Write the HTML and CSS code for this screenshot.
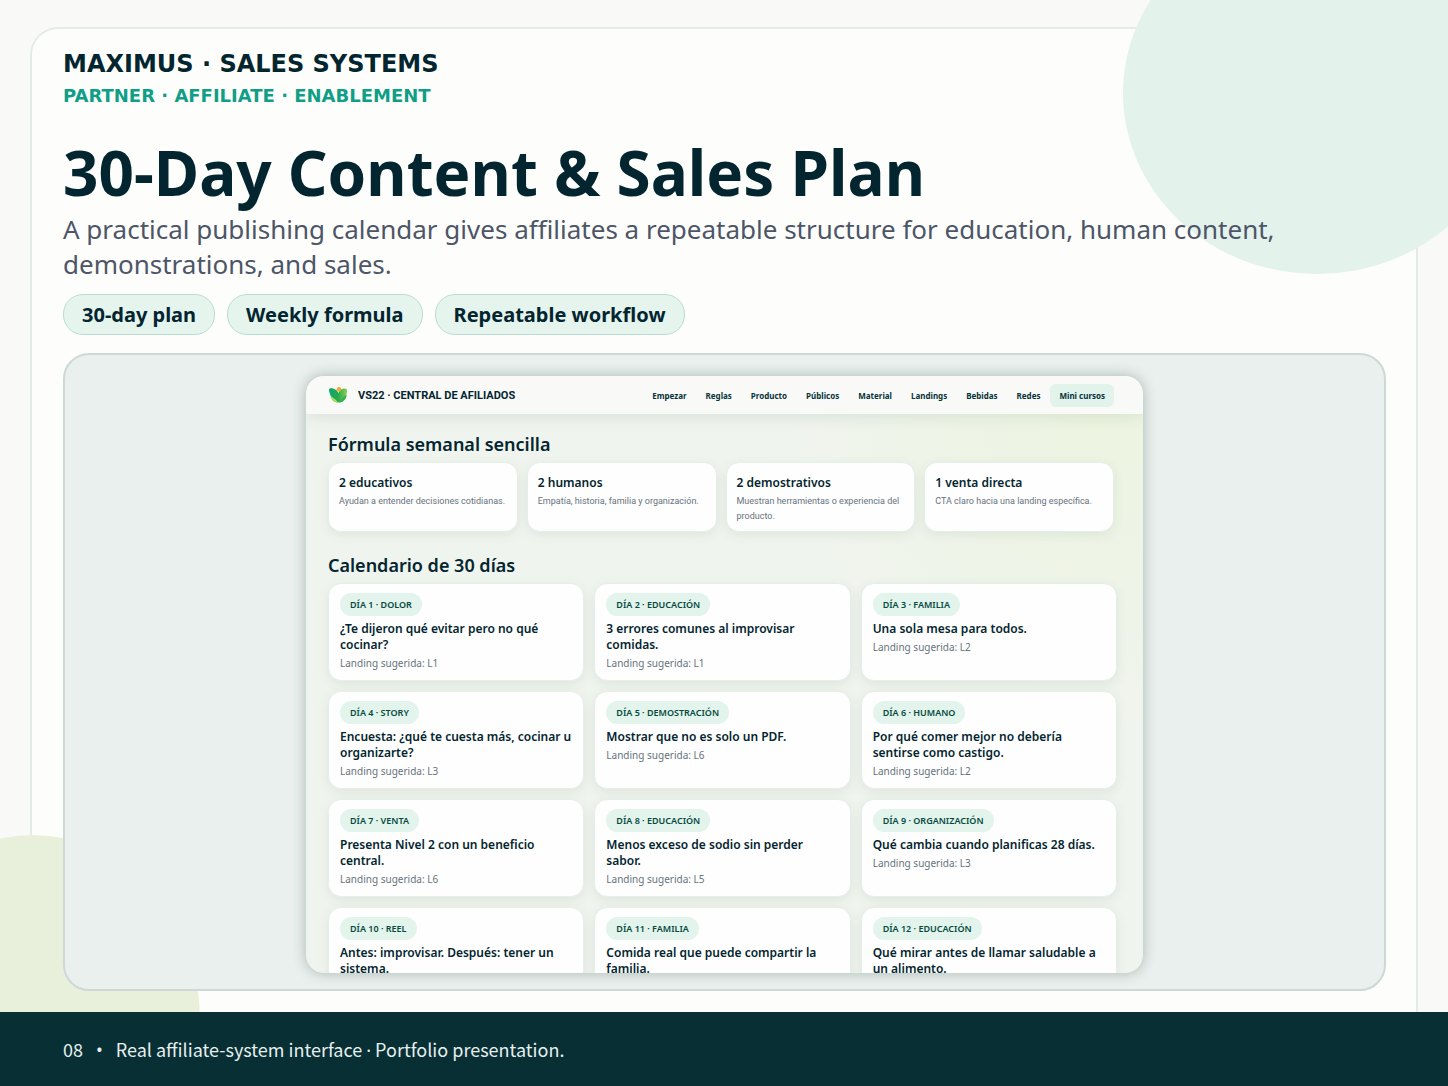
FILE: index.html
```html
<!DOCTYPE html>
<html lang="en">
<head>
<meta charset="UTF-8">
<meta name="viewport" content="width=device-width, initial-scale=1.0">
<title>30-Day Content &amp; Sales Plan</title>
<link rel="stylesheet" href="styles.css">
</head>
<body>
  <div class="frame"></div>
  <div class="blob blob-top"></div>
  <div class="blob blob-bottom"></div>

  <main class="slide">
    <div class="brand">
      <p class="brand-name">MAXIMUS · SALES SYSTEMS</p>
      <p class="brand-tag">PARTNER · AFFILIATE · ENABLEMENT</p>
    </div>

    <h1>30-Day Content &amp; Sales Plan</h1>
    <p class="lead">A practical publishing calendar gives affiliates a repeatable structure for education, human content, demonstrations, and sales.</p>

    <ul class="pills">
      <li>30-day plan</li>
      <li>Weekly formula</li>
      <li>Repeatable workflow</li>
    </ul>

    <section class="stage">
      <div class="app" lang="es">
        <header class="app-header">
          <svg class="logo" viewBox="0 0 20 16" aria-hidden="true">
            <defs>
              <linearGradient id="leaf" x1="0" y1="0" x2="1" y2="0">
                <stop offset="0" stop-color="#0ca672"/>
                <stop offset="0.5" stop-color="#25a94c"/>
                <stop offset="1" stop-color="#8fd158"/>
              </linearGradient>
            </defs>
            <path d="M1 3.500C.6 1.400 3 1 5 1.600C7.500 2.200 9.400 3.800 10.400 6C11.400 3.800 13 1.800 16 1.500C18.600 1.200 19.600 2.400 19 4.500C18.600 6 18.800 8.500 17.600 11C16.200 14 13.500 15.600 10.300 15.600C7.300 15.600 4.800 14.200 3.800 11.500C3.200 9.500 1.400 6.500 1 3.500Z" fill="url(#leaf)"/>
            <path d="M2.500 9C5 10.500 8 12.500 10.300 15.400C6.500 15.600 3 13 2.500 9Z" fill="#a9dc63"/>
            <path d="M18.600 8C16 9 13 11.500 11.500 15.400C15.500 15 18.200 12 18.600 8Z" fill="#35b04a"/>
            <circle cx="11" cy="2.300" r="2.200" fill="#f6a33c"/>
          </svg>
          <strong class="app-name">VS22 · CENTRAL DE AFILIADOS</strong>
          <nav>
            <a href="#">Empezar</a>
            <a href="#">Reglas</a>
            <a href="#">Producto</a>
            <a href="#">Públicos</a>
            <a href="#">Material</a>
            <a href="#">Landings</a>
            <a href="#">Bebidas</a>
            <a href="#">Redes</a>
            <a href="#" class="active">Mini cursos</a>
          </nav>
        </header>

        <div class="app-body">
          <h2>Fórmula semanal sencilla</h2>
          <div class="formula">
            <article class="card">
              <h3>2 educativos</h3>
              <p>Ayudan a entender decisiones cotidianas.</p>
            </article>
            <article class="card">
              <h3>2 humanos</h3>
              <p>Empatía, historia, familia y organización.</p>
            </article>
            <article class="card">
              <h3>2 demostrativos</h3>
              <p>Muestran herramientas o experiencia del producto.</p>
            </article>
            <article class="card">
              <h3>1 venta directa</h3>
              <p>CTA claro hacia una landing específica.</p>
            </article>
          </div>

          <h2>Calendario de 30 días</h2>
          <div class="calendar">
            <article class="card day">
              <span class="tag">DÍA 1 · DOLOR</span>
              <h3>¿Te dijeron qué evitar pero no qué cocinar?</h3>
              <p>Landing sugerida: L1</p>
            </article>
            <article class="card day">
              <span class="tag">DÍA 2 · EDUCACIÓN</span>
              <h3>3 errores comunes al improvisar comidas.</h3>
              <p>Landing sugerida: L1</p>
            </article>
            <article class="card day">
              <span class="tag">DÍA 3 · FAMILIA</span>
              <h3>Una sola mesa para todos.</h3>
              <p>Landing sugerida: L2</p>
            </article>
            <article class="card day">
              <span class="tag">DÍA 4 · STORY</span>
              <h3>Encuesta: ¿qué te cuesta más, cocinar u organizarte?</h3>
              <p>Landing sugerida: L3</p>
            </article>
            <article class="card day">
              <span class="tag">DÍA 5 · DEMOSTRACIÓN</span>
              <h3>Mostrar que no es solo un PDF.</h3>
              <p>Landing sugerida: L6</p>
            </article>
            <article class="card day">
              <span class="tag">DÍA 6 · HUMANO</span>
              <h3>Por qué comer mejor no debería sentirse como castigo.</h3>
              <p>Landing sugerida: L2</p>
            </article>
            <article class="card day">
              <span class="tag">DÍA 7 · VENTA</span>
              <h3>Presenta Nivel 2 con un beneficio central.</h3>
              <p>Landing sugerida: L6</p>
            </article>
            <article class="card day">
              <span class="tag">DÍA 8 · EDUCACIÓN</span>
              <h3>Menos exceso de sodio sin perder sabor.</h3>
              <p>Landing sugerida: L5</p>
            </article>
            <article class="card day">
              <span class="tag">DÍA 9 · ORGANIZACIÓN</span>
              <h3>Qué cambia cuando planificas 28 días.</h3>
              <p>Landing sugerida: L3</p>
            </article>
            <article class="card day">
              <span class="tag">DÍA 10 · REEL</span>
              <h3>Antes: improvisar. Después: tener un sistema.</h3>
            </article>
            <article class="card day">
              <span class="tag">DÍA 11 · FAMILIA</span>
              <h3>Comida real que puede compartir la familia.</h3>
            </article>
            <article class="card day">
              <span class="tag">DÍA 12 · EDUCACIÓN</span>
              <h3>Qué mirar antes de llamar saludable a un alimento.</h3>
            </article>
          </div>
        </div>
      </div>
    </section>
  </main>

  <footer>
    <span>08</span>
    <span class="dot">•</span>
    <span>Real affiliate-system interface <span class="dot">·</span> Portfolio presentation.</span>
  </footer>
</body>
</html>
```
FILE: styles.css
```css
* {
  box-sizing: border-box;
}

body {
  position: relative;
  display: flex;
  flex-direction: column;
  height: 100vh;
  margin: 0;
  overflow: hidden;
  background: #f9faf7;
  color: #03252f;
  font-family: "Noto Sans", sans-serif;
}

h1, h2, h3, p, ul {
  margin: 0;
  padding: 0;
}

/* background decoration */
.frame {
  position: absolute;
  top: 27px;
  right: 30px;
  bottom: 0;
  left: 30px;
  border: 2px solid #e5ece8;
  border-bottom: 0;
  border-radius: 28px 28px 0 0;
  background: #fdfefb;
}

.blob {
  position: absolute;
  border-radius: 50%;
}

.blob-top {
  top: -88px;
  right: -63px;
  width: 388px;
  height: 362px;
  background: #e3f2eb;
}

.blob-bottom {
  bottom: -119px;
  left: -134px;
  width: 334px;
  height: 370px;
  background: #e8f0dc;
}

.slide {
  position: relative;
  display: flex;
  flex-direction: column;
  flex: 1;
  min-height: 0;
  padding: 48px 62px 21px 63px;
}

.brand {
  font-family: "DejaVu Sans", sans-serif;
  font-weight: bold;
}

.brand-name {
  font-size: 24px;
  line-height: 32px;
}

.brand-tag {
  color: #109e87;
  font-size: 18px;
  line-height: 32px;
}

h1 {
  margin-top: 21px;
  font-size: 62px;
  line-height: 78px;
}

.lead {
  margin-top: 1px;
  color: #4d5568;
  font-size: 26px;
  line-height: 35px;
}

.pills {
  display: flex;
  gap: 12px;
  margin: 12px 0 18px;
  list-style: none;
}

.pills li {
  padding: 0 18px;
  border: 1px solid #b9ded1;
  border-radius: 20px;
  background: #e6f4ee;
  font-size: 20px;
  font-weight: bold;
  line-height: 39px;
}

.stage {
  display: flex;
  justify-content: center;
  flex: 1;
  min-height: 0;
  padding: 21px 22px 16px;
  border: 2px solid #cdd9d7;
  border-radius: 26px;
  background: #eaf0ed;
}

/* app window */
.app {
  width: 100%;
  max-width: 837px;
  overflow: hidden;
  border-radius: 18px;
  background: radial-gradient(circle at 95% 8%, #edf4e0 0, rgba(237, 244, 224, 0) 32%), #f0f4ee;
  box-shadow: 0 0 14px rgba(20, 50, 50, 0.3);
}

.app-header {
  display: flex;
  align-items: center;
  height: 38px;
  padding: 0 29px 0 22px;
  background: #f9faf7;
  box-shadow: 0 1px 18px rgba(20, 70, 50, 0.12);
}

.logo {
  width: 20px;
  height: 16px;
}

.app-name {
  margin-left: 10px;
  font-family: Roboto, sans-serif;
  font-size: 11px;
}

nav {
  display: flex;
  align-items: center;
  gap: 1px;
  margin-left: auto;
}

nav a {
  padding: 0 9px;
  border-radius: 6px;
  color: #05323a;
  font-size: 8px;
  font-weight: bold;
  line-height: 23px;
  text-decoration: none;
  white-space: nowrap;
}

nav .active {
  background: #e1f3ea;
}

.app-body {
  padding: 18px 26px 0 22px;
}

h2 {
  font-size: 18px;
  font-weight: 600;
  line-height: 24px;
}

.formula {
  display: grid;
  grid-template-columns: repeat(4, 1fr);
  gap: 9px;
  margin: 6px 3px 21px 0;
}

.card {
  border: 1px solid #e5efea;
  border-radius: 13px;
  background: #fefefe;
  box-shadow: 0 3px 12px rgba(30, 80, 55, 0.08);
}

.formula .card {
  min-height: 70px;
  padding: 12px 10px 6px;
}

.card h3 {
  font-size: 12px;
  font-weight: 600;
  line-height: 16px;
}

.card p {
  color: #66737c;
  font-size: 10px;
  line-height: 15px;
}

.formula p {
  margin-top: 3px;
  font-family: Roboto, sans-serif;
  font-size: 9px;
}

.calendar {
  display: grid;
  grid-template-columns: repeat(3, 1fr);
  gap: 10px;
  margin-top: 6px;
}

.calendar .card {
  min-height: 98px;
  padding: 7px 11px;
}

.tag {
  display: inline-block;
  padding: 0 10px;
  border-radius: 12px;
  background: #e2f4eb;
  color: #06493f;
  font-size: 9px;
  font-weight: 600;
  line-height: 23px;
}

.day h3 {
  margin-top: 5px;
}

.day p {
  margin-top: 3px;
}

footer {
  position: relative;
  display: flex;
  gap: 13px;
  height: 74px;
  padding: 0 63px;
  background: #082f34;
  color: #e6efee;
  font-family: "Noto Sans CJK SC", sans-serif;
  font-size: 18px;
  line-height: 74px;
}

.dot {
  font-family: "Noto Sans", sans-serif;
}
```
